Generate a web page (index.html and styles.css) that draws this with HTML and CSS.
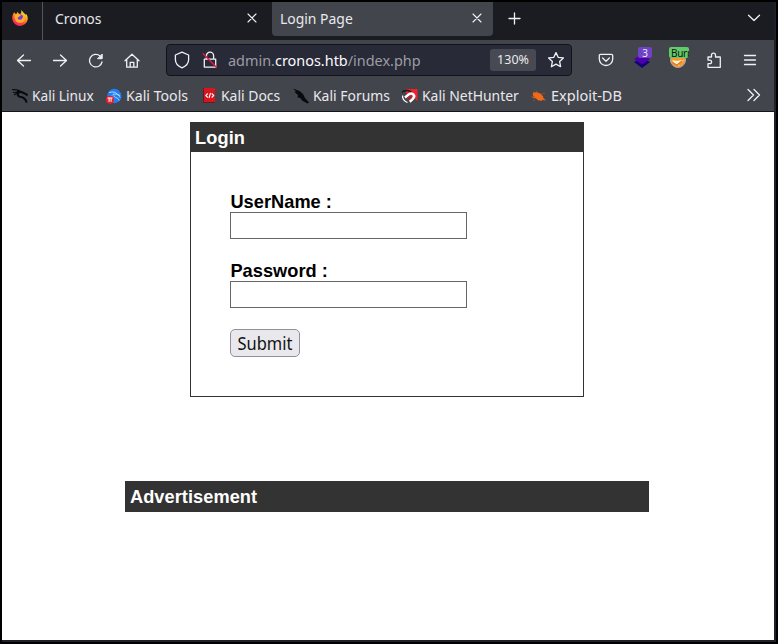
FILE: index.html
```html
<!DOCTYPE html>
<html lang="en">
<head>
<meta charset="utf-8">
<title>Login Page</title>
<link rel="stylesheet" href="styles.css">
</head>
<body>
<div class="window">
  <header class="browser">
    <div class="tabs">
      <div class="pinned">
        <svg width="16" height="16" viewBox="0 0 16 16"><defs><linearGradient id="fire" x1=".8" y1="0" x2=".3" y2="1"><stop stop-color="#fff04a"/><stop offset=".45" stop-color="#ff981b"/><stop offset=".75" stop-color="#ff4045"/><stop offset="1" stop-color="#ed1b76"/></linearGradient></defs><path fill="url(#fire)" d="M2.2 2.2 3.6 4 5 3.8 5.4 1.8 7.2 4 9.1 3.5 9.5 0c1 1.2 1.6 2.5 3 3.4.3.2.8 1 .9 1.4l.8-.7c1.3 1.5 1.7 3.3 1.5 5.3A7.8 7.8 0 0 1 .3 9.3C0 7 .8 4 2.2 2.2Z"/><circle cx="8.1" cy="8.1" r="3.5" fill="#7541dc"/><path fill="#ffaf20" d="M3.6 4.1c1.5-.6 3-.4 4.1.4l1.2 1-1.7 1.1-1.5 1.1c-.2 2 2 2.7 3.6 1.7 2-.9 2.3-3.7.6-5.1 3 .6 4 4.1 2.2 6.6-2 2.8-7 2.3-8.7-.5-1-1.7-1-4.5.2-6.3Z"/></svg>
      </div>
      <div class="tab"><span class="ui">Cronos</span><svg class="close" width="10" height="10" viewBox="0 0 10 10"><path d="m1 1 8 8M9 1 1 9"/></svg></div>
      <div class="tab active"><span class="ui">Login Page</span><svg class="close" width="10" height="10" viewBox="0 0 10 10"><path d="m1 1 8 8M9 1 1 9"/></svg></div>
      <svg class="new-tab" width="13" height="13" viewBox="0 0 13 13"><path d="M6.5 1v11M1 6.5h11"/></svg>
      <svg class="tab-list" width="14" height="14" viewBox="0 0 14 14"><path d="m1.5 5.3 5.5 5.2 5.5-5.2"/></svg>
    </div>
    <nav class="toolbar">
      <div class="history">
        <svg width="16" height="16" viewBox="0 0 16 16"><path d="M14.5 8.5H1.5m6-5.5-6 5.5 6 5.5"/></svg>
        <svg width="16" height="16" viewBox="0 0 16 16"><path d="M1.5 8.5h13m-6-5.5 6 5.5-6 5.5"/></svg>
        <svg width="16" height="16" viewBox="0 0 16 16"><path d="M12 3.9A6.3 6.3 0 1 0 14 10"/><path class="solid" d="M14.2 2.4v4.3H9.9z"/></svg>
        <svg width="16" height="16" viewBox="0 0 16 16"><path d="M1 8.7 8 2.2l7 6.5M2.7 7.5v7.7h10.6V7.5M6.2 15v-4.7h3.6V15"/></svg>
      </div>
      <div class="address">
        <svg class="shield" width="16" height="18" viewBox="0 0 16 18"><path d="M8 1.2 14.6 4v4.7c0 3.7-2.8 6.5-6.6 8.1-3.8-1.6-6.6-4.4-6.6-8.1V4Z"/></svg>
        <svg class="lock" width="16" height="18" viewBox="0 0 16 18"><path d="M4.4 8V4.8a3.6 3.6 0 0 1 7.2 0V8M2.3 8.2h11.4v7.9H2.3z"/><path class="slash" d="m1.2 2.8 13.2 13.4"/></svg>
        <span class="ui url">admin.<b>cronos.htb</b>/index.php</span>
        <span class="zoom-level">130%</span>
        <svg class="star" width="18" height="18" viewBox="0 0 18 18"><path d="m9 1.6 2.2 4.7 5.2.6-3.8 3.5 1 5.3L9 13.1l-4.6 2.6 1-5.3-3.8-3.5 5.2-.6Z"/></svg>
      </div>
      <div class="extensions">
        <svg width="16" height="16" viewBox="0 0 16 16"><path d="M2.6 2.3h10.8q1.3 0 1.3 1.3V7A6.7 6.5 0 0 1 1.3 7V3.6q0-1.3 1.3-1.3Z"/><path d="m4.6 6 3.4 3.2L11.4 6"/></svg>
        <div class="badge-icon"><svg width="18" height="18" viewBox="0 0 18 18"><path fill="#160078" stroke="none" d="m1 11 8-4 8 4-8 6Z"/><path fill="#4b00ad" stroke="none" d="m1 8 8-5 8 5-8 5.5Z"/></svg><span class="count">3</span></div>
        <div class="badge-icon"><svg width="18" height="18" viewBox="0 0 18 18"><circle cx="9" cy="9" r="7.5" fill="#f79730" stroke="#aaa" stroke-width="1"/><path fill="#fff1d2" stroke="none" d="m3 9 5 1 5-1 2 1-3 1-3 2 2 2-5-2Z"/><path d="m4 12 4 2 5-4" stroke="#d87b28"/></svg><span class="burp">Burp</span></div>
        <svg width="16" height="16" viewBox="0 0 16 16"><path d="M2 5h3.5V3.1a2 2 0 0 1 4 0V5h4.8v10.3H2v-3.6h1.8a1.8 1.8 0 0 0 0-3.6H2Z"/></svg>
        <svg width="16" height="16" viewBox="0 0 16 16"><path d="M2.5 3.5h11M2.5 8h11M2.5 12.5h11"/></svg>
      </div>
    </nav>
    <div class="bookmarks">
      <a><svg width="16" height="16" viewBox="0 0 16 16"><path d="M0 1.5c3 .2 6-.2 8 1.5M1 4.5 7 4M2 7l4-2.5" stroke="#080a0b" stroke-width="1.2"/><path d="m5 3 5 1.3 4 1.7 1.5 1.5M8 4c-3 1-3 4 0 4.7 4 .6 6 1.8 6.6 6" stroke="#080a0b" stroke-width="2"/></svg><span class="ui linux">Kali Linux</span></a>
      <a><svg width="16" height="16" viewBox="0 0 16 16"><circle cx="8.3" cy="8" r="7.2" fill="#247df0"/><path d="M3 4.5c4-1 7-.4 8 1.5l3 1.5M6 7.5c2-3 7-1 8 2M8 7.5c0 3 4 1 5 5" stroke="#a9d8ff"/><circle cx="4" cy="11.7" r="4" fill="#eb1e2e"/><path d="M1.5 10h5M3.1 10v3.8m2-3.8v3.8" stroke="white"/></svg><span class="ui tools">Kali Tools</span></a>
      <a><svg width="16" height="16" viewBox="0 0 16 16"><path fill="#d8141d" d="M1 0h12v15H1z"/><path d="M1.5 0v15M1 14.5h12" stroke="#621b2a"/><path d="M5.7 5.5 3.8 7.5l1.9 2M9.7 5.5l2 2-2 2M8.5 5 7 10" stroke="white" stroke-width="1.1"/></svg><span class="ui">Kali Docs</span></a>
      <a><svg width="16" height="16" viewBox="0 0 16 16"><path class="dragon" d="M0 .5 6.5 3 10 6l2 4 4 4.5-1.5 1L9 12.5 7.5 10 4.5 9.5 5 7 1.5 4 3 3.5Z"/></svg><span class="ui">Kali Forums</span></a>
      <a><svg width="16" height="16" viewBox="0 0 16 16"><path fill="#f2202d" d="M4 1h11.5v12L11 9 4 5Z"/><path d="M0 4c4-2 8-2 10 1" stroke="#151515" stroke-width="1.4"/><path d="m3 9.5 4-3.2c3-2.2 6.2.7 4.7 3.4-1.1 1.9-2.4 2.8-4 4" stroke="#fff" stroke-width="2.6"/><path d="M.5 7.5c0 4 2 6 5 7" stroke="#fff" stroke-width="1.3"/><path d="m4.5 11 3-2.5c1.5-.8 2.4.2 1.5 1.5l-2 1.6" stroke="#d41d2b" stroke-width="1.1"/></svg><span class="ui">Kali NetHunter</span></a>
      <a><svg width="16" height="16" viewBox="0 0 16 16"><path fill="#f16a18" d="m2 4 2 .5L6 4l4 2 2.5 3-.5.7 3 2.8-3.5-.8-1 1.3-2-.8-1 .5-2-2-2-.7-2 .3 1-2-1-2 1-1Z"/><path d="m0 8.5 4 .5M5 2.5l2 3m3 .5 4-.5M4 11.5l-2 1.5" stroke="#a64b24" stroke-width=".8"/></svg><span class="ui exploit">Exploit-DB</span></a>
      <svg class="overflow" width="16" height="16" viewBox="0 0 16 16"><path d="M2 2.5 7.5 8 2 13.5M8 2.5 13.5 8 8 13.5"/></svg>
    </div>
  </header>
  <main class="page">
    <section class="login">
      <h1>Login</h1>
      <form>
        <label for="user">UserName :</label>
        <input id="user" type="text">
        <label for="pass">Password :</label>
        <input id="pass" type="password">
        <button type="button"><span>Submit</span></button>
      </form>
    </section>
    <section class="advert">Advertisement</section>
  </main>
</div>
</body>
</html>
```

FILE: styles.css
```css
* { box-sizing: border-box; }
body { margin: 0; background: #000; }
.window {
  width: 778px; height: 644px;
  border: 2px solid #000;
  font-family: "Noto Sans", sans-serif;
  background: #20202c;
  overflow: hidden;
}
.browser { color: #e9e9ec; font-size: 14.67px; }
svg { flex: none; fill: none; stroke: none; display: block; }
.tabs svg, .toolbar svg { stroke: #f1f1f3; stroke-width: 1.3; stroke-linejoin: round; stroke-linecap: round; }
.toolbar .solid { fill: #f1f1f3; stroke-width: 1; }
.tabs .pinned svg { stroke: none; }
.ui { display: inline-block; white-space: nowrap; transform: scaleX(.95); transform-origin: left center; line-height: 20px; }
.linux { transform: scaleX(.935); }
.tools { transform: scaleX(.965); }
.exploit { transform: scaleX(.99); }

.tabs { width: 772px; height: 38px; background: #1b1c21; display: flex; align-items: flex-start; }
.pinned { width: 41px; height: 38px; padding: 8px 0 0 10px; border-right: 1px solid #55565b; }
.tab { width: 229px; height: 34px; padding: 0 15px 2px 12px; display: flex; align-items: center; justify-content: space-between; }
.tab.active { width: 221px; padding: 0 11px 2px 8px; background: #43454c; border-radius: 0 0 4px 4px; }
.tabs .close { stroke-width: 1.1; }
.new-tab { margin: 10px 0 0 15px; }
.tab-list { margin: 8px 13px 0 auto; }

.toolbar { width: 772px; height: 40px; background: #43454c; display: flex; align-items: center; }
.history { width: 164px; padding-left: 14px; display: flex; gap: 20px; }
.address { width: 406px; height: 32px; background: #282a37; border: 1px solid #121319; border-radius: 4px; display: flex; align-items: center; }
.shield { margin-left: 7px; }
.lock { margin-left: 12px; }
.toolbar .slash { stroke: #e21a4b; stroke-width: 1.4; }
.url { width: 258px; margin-left: 10px; font-size: 15.2px; color: #9c9da5; }
.url b { color: #fbfbfe; font-weight: 400; }
.zoom-level { width: 46px; height: 22px; margin-left: 4px; background: #484a53; border-radius: 3px; font-size: 12.5px; line-height: 22px; text-align: center; }
.star { margin-left: 11px; }
.history, .address, .extensions { flex: none; }
.extensions { margin-left: 26px; display: grid; grid-template-columns: repeat(5, 36px); align-items: center; }
.badge-icon { position: relative; width: 18px; height: 18px; margin-left: -1px; }
.count, .burp { position: absolute; font-size: 10px; line-height: 12px; height: 11px; border-radius: 2px; text-align: center; }
.count { top: -4px; left: 5px; width: 14px; background: #7042c5; }
.burp { top: -4px; left: 0; width: 20px; overflow: hidden; background: #63ca69; color: #101511; text-align: left; padding-left: 2px; letter-spacing: -.3px; }

.bookmarks { width: 772px; height: 32px; background: #43454c; border-bottom: 1px solid #141519; padding: 0 0 1px 10px; display: grid; grid-template-columns: 94px 96px 91px 109px 129px 215px 16px; align-items: center; }
.bookmarks a { display: flex; align-items: center; gap: 4px; }
.bookmarks a svg { margin-top: 1px; }
.bookmarks a:nth-child(3) { gap: 3px; }
.dragon { fill: #080a0b; }
.overflow { stroke: #f1f1f3; stroke-width: 1.3; stroke-linecap: round; stroke-linejoin: round; }

.page { width: 772px; height: 528px; padding-top: 10px; background: #fff; font-family: "Liberation Sans", Arial, sans-serif; font-size: 18.2px; font-weight: 700; }
.login { width: 394px; height: 275px; margin-left: 188px; border: 1px solid #333; }
h1 { margin: 0; height: 29px; padding-left: 4px; background: #333; color: #fff; font-size: 18.2px; line-height: 30px; letter-spacing: .1px; }
form { padding: 39px; display: flex; flex-direction: column; align-items: flex-start; }
label { height: 21px; line-height: 23px; color: #000; letter-spacing: .05px; padding-left: .4px; }
input { width: 237px; height: 27px; margin: 0 0 21px; padding: 0; border: 1px solid #666; background: #fff; }
button { width: 70px; height: 28px; padding: 0; border: 1px solid #8f8f9d; border-radius: 5px; background: #e9e9ed; color: #111; font: 17.33px/24px "Noto Sans", sans-serif; }
button span { display: inline-block; transform: scaleX(.95); }
.advert { width: 524px; height: 31px; margin: 84px 0 0 123px; padding-left: 5px; background: #333; color: #fff; line-height: 33px; letter-spacing: .06px; }
```
